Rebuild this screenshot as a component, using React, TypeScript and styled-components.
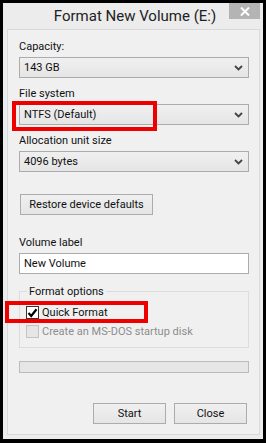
import React from "react";
import styled, { createGlobalStyle } from "styled-components";

const GlobalStyle = createGlobalStyle`
  html, body {
    margin: 0;
    padding: 0;
    background: #000;
  }
  body {
    font-family: "Segoe UI", Roboto, sans-serif;
    font-size: 11px;
    color: #111;
  }
`;

const Screen = styled.div`
  width: 266px;
  height: 443px;
  box-sizing: border-box;
  padding: 3px 3px 4px 3px;
  background: #000;
`;

const Window = styled.div`
  position: relative;
  height: 100%;
  display: flex;
  flex-direction: column;
  box-sizing: border-box;
  padding: 0 3px 4px 4px;
  background: #ececec;
`;

const TitleBar = styled.div`
  height: 26px;
  display: grid;
  grid-template-columns: 1fr auto 1fr;
  margin-right: -3px;
`;

const Title = styled.div`
  grid-column: 2;
  align-self: center;
  font-size: 15px;
  color: #222;
  white-space: nowrap;
`;

const CloseBox = styled.div`
  grid-column: 3;
  justify-self: end;
  align-self: start;
  width: 31px;
  height: 16px;
  margin-right: 3px;
  background: #b4b4b4;
  display: flex;
  align-items: center;
  justify-content: center;
`;

const Client = styled.div`
  flex: 1;
  display: flex;
  flex-direction: column;
  border: 1px solid #d9d9d9;
  background: #f0f0f0;
  padding: 9px 10px 0 11px;
`;

const Label = styled.div<{ $gap?: number }>`
  height: 15px;
  line-height: 15px;
  margin-top: ${(p) => p.$gap ?? 0}px;
  margin-bottom: 3px;
  white-space: nowrap;
`;

const Combo = styled.div`
  height: 21px;
  box-sizing: border-box;
  border: 1px solid #acacac;
  background: linear-gradient(#f0f0f0, #e5e5e5);
  display: flex;
  align-items: center;
  justify-content: space-between;
  padding: 0 5px 0 4px;
`;

const Push = styled.div<{ $width: number }>`
  width: ${(p) => p.$width}px;
  height: 21px;
  box-sizing: border-box;
  border: 1px solid #acacac;
  background: linear-gradient(#f0f0f0, #e5e5e5);
  display: flex;
  align-items: center;
  justify-content: center;
`;

const RestoreButton = styled(Push)`
  margin-top: 22px;
  margin-left: 1px;
`;

const TextBox = styled.div`
  height: 21px;
  box-sizing: border-box;
  border: 1px solid #acacac;
  background: #fff;
  display: flex;
  align-items: center;
  padding: 0 4px;
`;

const Group = styled.fieldset`
  margin: 10px 0 0 0;
  padding: 4px 0 6px 6px;
  border: 1px solid #dcdcdc;
  min-width: 0;
`;

const Legend = styled.legend`
  padding: 0 2px;
  margin-left: 1px;
  line-height: 15px;
`;

const CheckRow = styled.div<{ $disabled?: boolean }>`
  height: 19px;
  display: flex;
  align-items: center;
  gap: 3px;
  color: ${(p) => (p.$disabled ? "#8d8d8d" : "#111")};
`;

const Box = styled.div<{ $disabled?: boolean }>`
  width: 13px;
  height: 13px;
  box-sizing: border-box;
  border: 1px solid ${(p) => (p.$disabled ? "#c4c4c4" : "#333")};
  background: ${(p) => (p.$disabled ? "#e6e6e6" : "#fff")};
  display: flex;
  align-items: center;
  justify-content: center;
`;

const Progress = styled.div`
  margin-top: 13px;
  height: 12px;
  box-sizing: border-box;
  border: 1px solid #bcbcbc;
  background: #e6e6e6;
`;

const Footer = styled.div`
  margin-top: 30px;
  margin-right: 2px;
  display: flex;
  justify-content: flex-end;
  gap: 8px;
`;

const Highlight = styled.div<{ $x: number; $y: number; $w: number; $h: number }>`
  position: absolute;
  left: ${(p) => p.$x}px;
  top: ${(p) => p.$y}px;
  width: ${(p) => p.$w}px;
  height: ${(p) => p.$h}px;
  box-sizing: border-box;
  border: 4px solid #ee0000;
  pointer-events: none;
`;

const Chevron = () => (
  <svg width="9" height="6" viewBox="0 0 9 6">
    <polyline points="1,1 4.5,4.5 8,1" fill="none" stroke="#444" strokeWidth="1.8" />
  </svg>
);

const Select = ({ value }: { value: string }) => (
  <Combo>
    <span>{value}</span>
    <Chevron />
  </Combo>
);

export default function App() {
  return (
    <Screen>
      <GlobalStyle />
      <Window>
        <TitleBar>
          <Title>Format New Volume (E:)</Title>
          <CloseBox>
            <svg width="10" height="9" viewBox="0 0 10 9">
              <path d="M1 0.5 L9 8.5 M9 0.5 L1 8.5" stroke="#fff" strokeWidth="2" />
            </svg>
          </CloseBox>
        </TitleBar>
        <Client>
          <Label>Capacity:</Label>
          <Select value="143 GB" />
          <Label $gap={8}>File system</Label>
          <Select value="NTFS (Default)" />
          <Label $gap={8}>Allocation unit size</Label>
          <Select value="4096 bytes" />
          <RestoreButton $width={133}>Restore device defaults</RestoreButton>
          <Label $gap={20}>Volume label</Label>
          <TextBox>New Volume</TextBox>
          <Group>
            <Legend>Format options</Legend>
            <CheckRow>
              <Box>
                <svg width="11" height="10" viewBox="0 0 11 10">
                  <polyline points="1.5,5 4.2,8 9.5,1.2" fill="none" stroke="#000" strokeWidth="2.2" />
                </svg>
              </Box>
              Quick Format
            </CheckRow>
            <CheckRow $disabled>
              <Box $disabled />
              Create an MS-DOS startup disk
            </CheckRow>
          </Group>
          <Progress />
          <Footer>
            <Push $width={73}>Start</Push>
            <Push $width={73}>Close</Push>
          </Footer>
        </Client>
        <Highlight $x={9} $y={98} $w={145} $h={30} />
        <Highlight $x={2} $y={298} $w={143} $h={22} />
      </Window>
    </Screen>
  );
}
